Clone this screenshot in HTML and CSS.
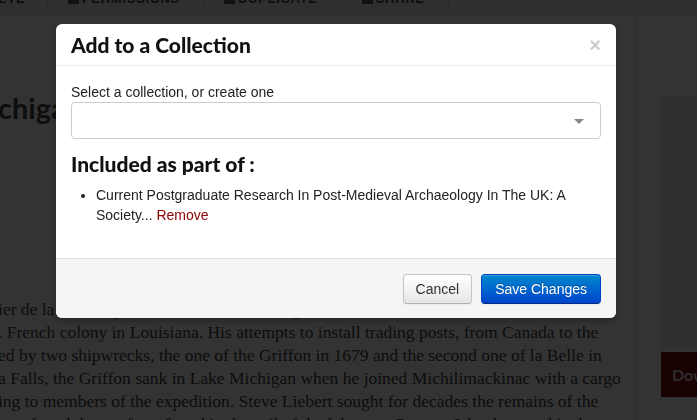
FILE: index.html
```html
<!DOCTYPE html>
<html lang="en">
<head>
    <meta charset="UTF-8">
    <meta name="viewport" content="width=device-width, initial-scale=1.0">
    <title>Add to a Collection</title>
    <link rel="stylesheet" href="styles.css">
</head>
<body>
    <div class="page">
        <!-- Barra de acciones -->
        <nav class="toolbar">
            <div class="tool tool-first">Delete</div>
            <div class="tool"><span class="tool-icon"></span>Permissions</div>
            <div class="tool"><span class="tool-icon"></span>Duplicate</div>
            <div class="tool"><span class="tool-icon"></span>Share</div>
        </nav>

        <div class="layout">
            <main class="article">
                <h1 class="title">chigan Shipwreck</h1>
                <p class="story">
                    <span>ier de la Salle explored the Great Lakes region and the</span>
                    <span>. French colony in Louisiana. His attempts to install trading posts, from Canada to the</span>
                    <span>ed by two shipwrecks, the one of the Griffon in 1679 and the second one of la Belle in</span>
                    <span>a Falls, the Griffon sank in Lake Michigan when he joined Michilimackinac with a cargo</span>
                    <span>ing to members of the expedition. Steve Liebert sought for decades the remains of the</span>
                    <span>wreck and the artefacts found in the soil of the lake near Poverty Island, an archipelago</span>
                </p>
            </main>
            <aside class="sidebar">
                <div class="preview"></div>
                <a class="btn-download" href="#">Download</a>
            </aside>
        </div>
    </div>

    <!-- Modal -->
    <div class="modal-backdrop"></div>
    <div class="modal">
        <div class="modal-header">
            <h3>Add to a Collection</h3>
            <span class="close">&times;</span>
        </div>
        <div class="modal-body">
            <label class="field-label">Select a collection, or create one</label>
            <div class="select">
                <span class="caret"></span>
            </div>
            <h3 class="included">Included as part of :</h3>
            <ul class="collections">
                <li>Current Postgraduate Research In Post-Medieval Archaeology In The UK: A Society... <a href="#" class="remove">Remove</a></li>
            </ul>
        </div>
        <div class="modal-footer">
            <button class="btn">Cancel</button>
            <button class="btn btn-primary">Save Changes</button>
        </div>
    </div>
</body>
</html>
```

FILE: styles.css
```css
html, body {
    margin: 0;
    height: 100%;
    overflow: hidden;
}
body {
    background-color: #fff;
    font-family: "Liberation Sans", Arial, sans-serif;
    font-size: 14px;
    color: #333;
}

/* Pagina de fondo */
.toolbar {
    display: flex;
    height: 40px;
    margin-top: -26px;
    background-color: #ececec;
    border-bottom: 1px solid #d4d4d4;
}
.tool {
    display: flex;
    align-items: flex-end;
    padding: 0 23px 8px 20px;
    border-right: 1px solid #d2d2d2;
    text-transform: uppercase;
    font-weight: bold;
    font-size: 13px;
    letter-spacing: 0.7px;
    color: #444;
}
.tool-first {
    width: 24px;
    padding-left: 0;
    text-indent: -30px;
    overflow: hidden;
}
.tool-icon {
    width: 11px;
    height: 12px;
    margin-right: 3px;
    margin-bottom: 2px;
    background-color: #555;
}
.layout {
    display: flex;
}
.article {
    flex: 1;
    margin-left: -2px;
    overflow: hidden;
}
.title {
    margin: 75px 0 0 0;
    font-family: Lato, "Open Sans", sans-serif;
    font-size: 29px;
    font-weight: bold;
    color: #444;
    white-space: nowrap;
}
.story {
    margin: 173px 0 0 0;
    font-family: "Liberation Serif", "Times New Roman", serif;
    font-size: 17.5px;
    line-height: 23px;
    color: #444;
}
.story span {
    display: block;
    white-space: nowrap;
}
.sidebar {
    width: 36px;
    padding-left: 24px;
    border-left: 1px solid #e6e6e6;
    padding-top: 82px;
}
.preview {
    height: 251px;
    background-color: #e8e8e2;
}
.btn-download {
    display: block;
    margin-top: 4px;
    height: 45px;
    line-height: 45px;
    padding-left: 11px;
    background-color: #800505;
    color: #ddd;
    font-family: Lato, sans-serif;
    font-weight: bold;
    font-size: 16px;
    text-decoration: none;
    white-space: nowrap;
    overflow: hidden;
}

/* Modal */
.modal-backdrop {
    position: fixed;
    left: 0;
    top: 0;
    width: 100%;
    height: 100%;
    background-color: rgba(0, 0, 0, 0.8);
}
.modal {
    position: fixed;
    left: 56px;
    top: 24px;
    width: 560px;
    background-color: #fff;
    border-radius: 6px;
    box-shadow: 0 3px 7px rgba(0, 0, 0, 0.3);
    overflow: hidden;
}
.modal-header {
    display: flex;
    justify-content: space-between;
    align-items: center;
    height: 41px;
    padding: 0 15px;
    border-bottom: 1px solid #eee;
}
.modal-header h3, .included {
    margin: 0;
    font-family: Lato, "Open Sans", sans-serif;
    font-size: 21px;
    font-weight: 900;
    color: #111;
}
.close {
    font-size: 20px;
    font-weight: bold;
    color: #000;
    opacity: 0.2;
    margin-top: 2px;
}
.modal-body {
    padding: 17px 15px 33px 15px;
}
.field-label {
    display: block;
    line-height: 18px;
    color: #222;
    margin-bottom: 1px;
}
.select {
    position: relative;
    height: 35px;
    border: 1px solid #ccc;
    border-radius: 4px;
    background-color: #fff;
}
.caret {
    position: absolute;
    right: 16px;
    top: 16px;
    border-left: 5px solid transparent;
    border-right: 5px solid transparent;
    border-top: 5px solid #888;
}
.included {
    margin-top: 12px;
}
.collections {
    margin: 9px 0 0 0;
    padding-left: 25px;
    line-height: 20px;
    color: #222;
}
.remove {
    color: #8b0000;
    text-decoration: none;
}
.modal-footer {
    display: flex;
    justify-content: flex-end;
    padding: 15px 15px 14px 15px;
    background-color: #f5f5f5;
    border-top: 1px solid #ddd;
}
.btn {
    height: 30px;
    padding: 0 12px;
    margin-left: 9px;
    font-family: "Liberation Sans", Arial, sans-serif;
    font-size: 14px;
    color: #333;
    background-image: linear-gradient(to bottom, #ffffff, #e6e6e6);
    border: 1px solid #c5c5c5;
    border-bottom-color: #b3b3b3;
    border-radius: 4px;
    box-shadow: inset 0 1px 0 rgba(255, 255, 255, 0.2), 0 1px 2px rgba(0, 0, 0, 0.05);
    cursor: pointer;
}
.btn-primary {
    padding: 0 13px;
    color: #fff;
    background-image: linear-gradient(to bottom, #0088cc, #0044cc);
    border-color: #0044cc #0044cc #002a80;
    text-shadow: 0 -1px 0 rgba(0, 0, 0, 0.25);
}
```
